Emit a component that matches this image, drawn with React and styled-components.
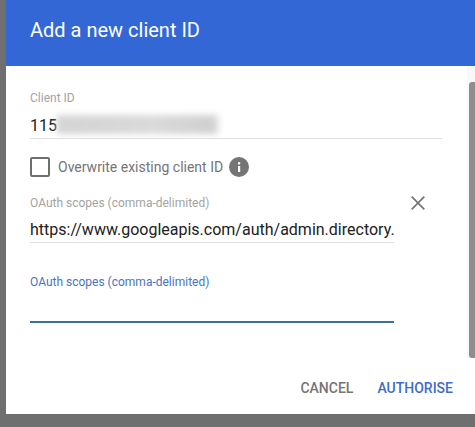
import React from 'react'
import styled, { createGlobalStyle } from 'styled-components'

const GlobalStyle = createGlobalStyle`
  html, body {
    margin: 0;
    padding: 0;
    background: #6f6f6f;
    font-family: Roboto, "Liberation Sans", sans-serif;
  }
`

const Backdrop = styled.div`
  width: 475px;
  height: 427px;
  box-sizing: border-box;
  padding: 0 0 13px 6px;
  background: #6f6f6f;
  display: flex;
  overflow: hidden;
`

const Dialog = styled.div`
  flex: 1;
  display: flex;
  flex-direction: column;
  background: #fff;
`

const Header = styled.h2`
  margin: 0;
  height: 66px;
  box-sizing: border-box;
  padding-left: 24px;
  background: #3367d6;
  color: #fff;
  font-size: 20px;
  font-weight: 400;
  line-height: 60px;
`

const Main = styled.div`
  flex: 1;
  display: flex;
  min-height: 0;
`

const Content = styled.div`
  flex: 1;
  padding: 25px 0 0 24px;
  display: flex;
  flex-direction: column;
`

const Track = styled.div`
  width: 8px;
  padding: 16px 0 0 2px;
  box-sizing: border-box;
  background: #f8f8f8;
  display: flex;
`

const Thumb = styled.div`
  flex: 1;
  background: #8e8e8e;
  border-radius: 3px 0 0 3px;
`

const Field = styled.div`
  width: ${({ $width }) => $width}px;
  margin-top: ${({ $top }) => $top || 0}px;
`

const Label = styled.div`
  height: 14px;
  font-size: 12px;
  line-height: 14px;
  color: ${({ $focused }) => ($focused ? '#4a74bd' : '#a3a3a3')};
`

const Value = styled.div`
  height: ${({ $height }) => $height || 33}px;
  box-sizing: border-box;
  padding-top: ${({ $pad }) => $pad || 10}px;
  font-size: 16px;
  line-height: 19px;
  color: #212121;
  white-space: nowrap;
  overflow: hidden;
  display: flex;
  border-bottom: ${({ $focused }) =>
    $focused ? '2px solid #3f6f9f' : '1px solid #e0e0e0'};
`

const Redacted = styled.span`
  display: block;
  width: 162px;
  height: 19px;
  margin-top: -1px;
  background: linear-gradient(90deg, #d4d4d4 0%, #dadada 60%, #d0d0d0 96%, #e8e8e8 100%);
  filter: blur(3px);
`

const CheckRow = styled.div`
  display: flex;
  align-items: center;
  margin-top: 18px;
  height: 20px;
`

const Checkbox = styled.span`
  width: 20px;
  height: 20px;
  box-sizing: border-box;
  border: 2px solid #6e6e6e;
  border-radius: 2px;
`

const CheckLabel = styled.span`
  margin-left: 8px;
  font-size: 14px;
  color: #757575;
`

const InfoBadge = styled.svg`
  width: 20px;
  height: 20px;
  margin-left: 6px;
`

const ScopeRow = styled.div`
  display: flex;
  margin-top: 19px;
`

const RemoveIcon = styled.svg`
  width: 14px;
  height: 14px;
  margin: 0 0 0 17px;
`

const Actions = styled.div`
  display: flex;
  justify-content: flex-end;
  gap: 24px;
  height: 56px;
  padding: 0 22px 0 0;
  box-sizing: border-box;
`

const ActionButton = styled.button`
  padding: 0;
  height: 24px;
  margin-top: 18px;
  border: 0;
  background: none;
  font-family: inherit;
  font-size: 14px;
  font-weight: 500;
  color: ${({ $primary }) => ($primary ? '#3f6cc4' : '#757575')};
`

export default function App() {
  return (
    <>
      <GlobalStyle />
      <Backdrop>
        <Dialog>
          <Header>Add a new client ID</Header>
          <Main>
            <Content>
              <Field $width={412}>
                <Label>Client ID</Label>
                <Value $height={34} $pad={11}>
                  115
                  <Redacted />
                </Value>
              </Field>
              <CheckRow>
                <Checkbox />
                <CheckLabel>Overwrite existing client ID</CheckLabel>
                <InfoBadge viewBox="0 0 20 20">
                  <circle cx="10" cy="10" r="10" fill="#757575" />
                  <rect x="9" y="9" width="2.2" height="6" fill="#fff" />
                  <rect x="9" y="5.2" width="2.2" height="2.2" fill="#fff" />
                </InfoBadge>
              </CheckRow>
              <ScopeRow>
                <Field $width={364}>
                  <Label>OAuth scopes (comma-delimited)</Label>
                  <Value>https://www.googleapis.com/auth/admin.directory.</Value>
                </Field>
                <RemoveIcon viewBox="0 0 14 14">
                  <path
                    d="M0.7 0.7L13.3 13.3M13.3 0.7L0.7 13.3"
                    stroke="#757575"
                    strokeWidth="1.7"
                    fill="none"
                  />
                </RemoveIcon>
              </ScopeRow>
              <Field $width={364} $top={32}>
                <Label $focused>OAuth scopes (comma-delimited)</Label>
                <Value $focused $height={34} />
              </Field>
            </Content>
            <Track>
              <Thumb />
            </Track>
          </Main>
          <Actions>
            <ActionButton>CANCEL</ActionButton>
            <ActionButton $primary>AUTHORISE</ActionButton>
          </Actions>
        </Dialog>
      </Backdrop>
    </>
  )
}
